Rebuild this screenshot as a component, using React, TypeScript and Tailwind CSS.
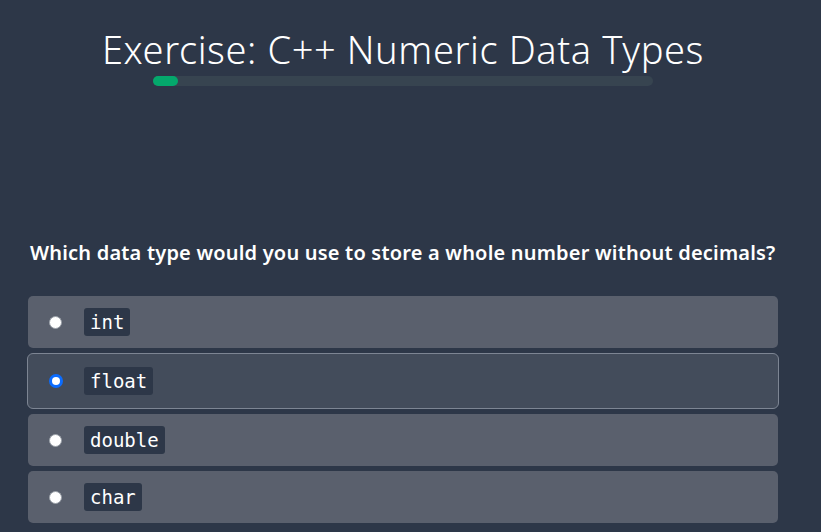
const OPTIONS = ["int", "float", "double", "char"];

function Radio({ checked }: { checked: boolean }) {
  if (checked) {
    return (
      <span className="flex h-[14px] w-[14px] shrink-0 items-center justify-center rounded-full bg-[#0b6cff]">
        <span className="h-[8px] w-[8px] rounded-full bg-white" />
      </span>
    );
  }
  return <span className="h-[13px] w-[13px] shrink-0 rounded-full border border-[#9aa0a8] bg-white" />;
}

export default function App() {
  const selected = 1;
  return (
    <div className="min-h-[532px] bg-[#2d3748] text-white [font-family:'Noto_Sans',sans-serif]">
      <div className="w-[806px]">
        <header className="flex flex-col items-center pt-[24px]">
          <h1 className="text-[38px] font-light leading-[50px] tracking-[0.6px]">Exercise: C++ Numeric Data Types</h1>
          <div className="mt-[2px] h-[10px] w-[500px] rounded-full bg-[#374450]">
            <div className="h-full w-[25px] rounded-full bg-[#04a86c]" />
          </div>
        </header>

        <main className="px-[28px] pt-[154px]">
          <p className="pl-[2px] text-[20px] font-semibold leading-[26px] tracking-[0.2px]">
            Which data type would you use to store a whole number without decimals?
          </p>
          <ul className="mt-[30px] flex flex-col gap-[5px]">
            {OPTIONS.map((opt, i) => (
              <li
                key={opt}
                className={
                  i === selected
                    ? "-mx-[1px] flex h-[56px] items-center gap-[21px] rounded-[6px] border border-[#7d8593] bg-[#434c5b] px-[21px]"
                    : "flex h-[52px] items-center gap-[22px] rounded-[5px] bg-[#5a606d] px-[21px]"
                }
              >
                <Radio checked={i === selected} />
                <code className="rounded-[3px] bg-[#2d3748] px-[6px] py-[2px] text-[19px] leading-[24px] [font-family:'DejaVu_Sans_Mono',monospace]">
                  {opt}
                </code>
              </li>
            ))}
          </ul>
        </main>
      </div>
    </div>
  );
}
